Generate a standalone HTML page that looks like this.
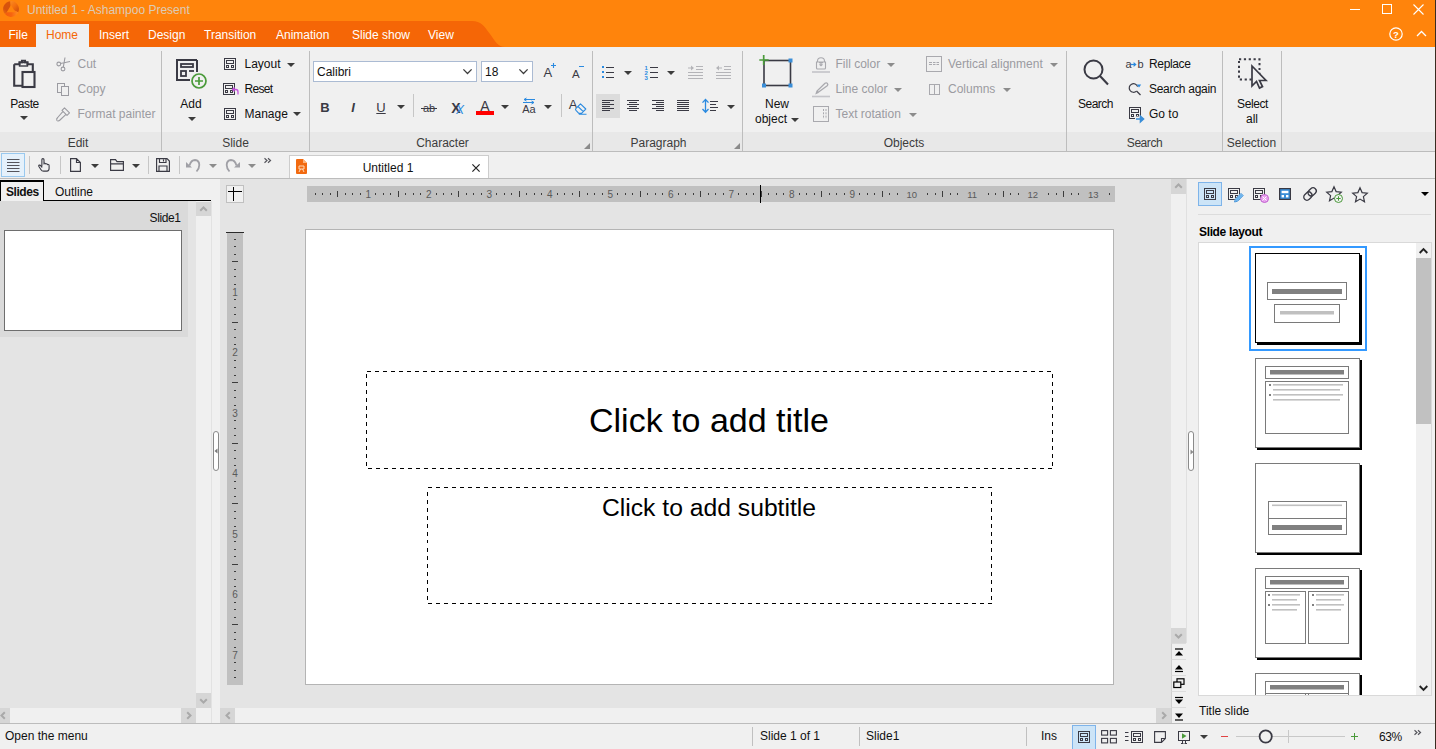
<!DOCTYPE html><html><head><meta charset="utf-8"><title>Untitled 1 - Ashampoo Present</title><style>
*{box-sizing:border-box;margin:0;padding:0}
html,body{width:1436px;height:749px;overflow:hidden;background:#f0f0f0}
body{position:relative;font:12px "Liberation Sans",sans-serif;color:#111}
.a{position:absolute}
.t{position:absolute;white-space:nowrap;line-height:14px;height:14px}
.c{transform:translateX(-50%)}
.d{color:#9b9ba1}
.w{color:#fff}
.sep{position:absolute;width:1px;background:#c6c6c6}
svg{position:absolute;overflow:visible}
.arr{position:absolute;width:0;height:0;border-left:4px solid transparent;border-right:4px solid transparent;border-top:4px solid #3c3c3c}
.arr.g{border-top-color:#8c8c8c}
</style></head><body>
<div class="a" style="left:0px;top:0px;width:1436px;height:47px;background:#ff840c;"></div>
<svg style="left:0px;top:21px" width="520" height="26" viewBox="0 0 520 26"><path d="M0 0 H472 C481 0 484 5 490 13 C495 20 498 26 505 26 H0 Z" fill="#f56606"/></svg>
<svg style="left:3.05px;top:0.9px" width="16" height="16" viewBox="0 0 16 16"><defs><linearGradient id="lgL" x1="0.8" y1="0" x2="0.2" y2="1"><stop offset="0" stop-color="#d9530b"/><stop offset="0.7" stop-color="#d6520c"/><stop offset="1" stop-color="#ea6a14"/></linearGradient><linearGradient id="lgR" x1="0" y1="0" x2="0.8" y2="1"><stop offset="0" stop-color="#fb8a22"/><stop offset="0.5" stop-color="#f4700f"/><stop offset="1" stop-color="#d4500b"/></linearGradient><linearGradient id="lgB" x1="0" y1="0" x2="1" y2="0"><stop offset="0" stop-color="#f25a0e"/><stop offset="0.5" stop-color="#f7640f"/><stop offset="1" stop-color="#ff8e24"/></linearGradient></defs><path d="M8 8 L1.95 13.08 A7.9 7.9 0 0 1 7.31 0.13 Z" fill="url(#lgL)"/><path d="M8 8 L7.31 0.13 A7.9 7.9 0 0 1 15.16 11.34 Z" fill="url(#lgR)"/><path d="M8 8 L15.16 11.34 A7.9 7.9 0 0 1 1.95 13.08 Z" fill="url(#lgB)"/><path d="M8.05 3.9 L12.4 11.15 H3.8 Z" fill="#ff840c"/></svg>
<div class="t " style="left:27px;top:3px;color:#dccbb6">Untitled 1 - Ashampoo Present</div>
<svg style="left:1350px;top:4px" width="80" height="12" viewBox="0 0 80 12"><path d="M0 5.5 H10" stroke="#fff" stroke-width="1" fill="none"/><rect x="32.5" y="0.5" width="9" height="9" stroke="#fff" fill="none"/><path d="M63.5 0.5 L73.5 10.5 M73.5 0.5 L63.5 10.5" stroke="#fff" stroke-width="1.1" fill="none"/></svg>
<svg style="left:1389px;top:27px" width="40" height="14" viewBox="0 0 40 14"><circle cx="7" cy="7" r="6.2" stroke="#fff" stroke-width="1.2" fill="none"/><text x="7" y="10.5" font-size="9.5" font-weight="bold" text-anchor="middle" fill="#fff" font-family="Liberation Sans,sans-serif">?</text><path d="M28 9 L32.5 4.5 L37 9" stroke="#fff" stroke-width="1.3" fill="none"/></svg>
<div class="a" style="left:36px;top:24px;width:53px;height:23px;background:#f0f0f0;"></div>
<div class="t w" style="left:8.5px;top:27.5px;">File</div>
<div class="t " style="left:46px;top:27.5px;color:#f56606">Home</div>
<div class="t w" style="left:99px;top:27.5px;">Insert</div>
<div class="t w" style="left:148px;top:27.5px;">Design</div>
<div class="t w" style="left:204px;top:27.5px;">Transition</div>
<div class="t w" style="left:276px;top:27.5px;">Animation</div>
<div class="t w" style="left:352px;top:27.5px;">Slide show</div>
<div class="t w" style="left:428px;top:27.5px;">View</div>
<div class="a" style="left:0px;top:47px;width:1436px;height:104px;background:#f0f0f0;"></div>
<div class="a" style="left:0px;top:132px;width:1436px;height:19px;background:#e8e8e8;"></div>
<div class="a" style="left:0px;top:151px;width:1436px;height:1px;background:#bcbcbc;"></div>
<div class="a" style="left:161px;top:51px;width:1px;height:100px;background:#bdbdbd;"></div>
<div class="a" style="left:309px;top:51px;width:1px;height:100px;background:#bdbdbd;"></div>
<div class="a" style="left:592px;top:51px;width:1px;height:100px;background:#bdbdbd;"></div>
<div class="a" style="left:742px;top:51px;width:1px;height:100px;background:#bdbdbd;"></div>
<div class="a" style="left:1066px;top:51px;width:1px;height:100px;background:#bdbdbd;"></div>
<div class="a" style="left:1222px;top:51px;width:1px;height:100px;background:#bdbdbd;"></div>
<div class="a" style="left:1281px;top:51px;width:1px;height:100px;background:#bdbdbd;"></div>
<div class="t c" style="left:78px;top:135.5px;color:#3c3c3c">Edit</div>
<div class="t c" style="left:235.5px;top:135.5px;color:#3c3c3c">Slide</div>
<div class="t c" style="left:442.5px;top:135.5px;color:#3c3c3c">Character</div>
<div class="t c" style="left:658.5px;top:135.5px;color:#3c3c3c">Paragraph</div>
<div class="t c" style="left:904px;top:135.5px;color:#3c3c3c">Objects</div>
<div class="t c" style="left:1144.5px;top:135.5px;color:#3c3c3c"><span style="letter-spacing:-0.45px">Search</span></div>
<div class="t c" style="left:1251.5px;top:135.5px;color:#3c3c3c">Selection</div>
<svg style="left:584px;top:143px" width="6" height="6" viewBox="0 0 6 6"><path d="M6 0 V6 H0 Z" fill="#8a8a8a"/></svg>
<svg style="left:734px;top:143px" width="6" height="6" viewBox="0 0 6 6"><path d="M6 0 V6 H0 Z" fill="#8a8a8a"/></svg>
<svg style="left:13px;top:60px" width="23" height="28" viewBox="0 0 23 28"><path d="M1.2 4.2 H6.5 V2.2 H9 V0.8 H12 V2.2 H14.5 V4.2 H19.8 V12 M1.2 4.2 V25.8 H9" stroke="#3a3a44" stroke-width="2.1" fill="none"/><rect x="6.5" y="2.5" width="8" height="3.5" fill="none" stroke="#3a3a44" stroke-width="1.4"/><rect x="9.5" y="12" width="12" height="15" fill="#f0f0f0" stroke="#3a3a44" stroke-width="2.1"/></svg>
<div class="t c" style="left:24.5px;top:97px;letter-spacing:-0.4px">Paste</div>
<div class="arr " style="left:20px;top:116px"></div>
<svg style="left:56px;top:57px" width="15" height="15" viewBox="0 0 15 15"><circle cx="2.8" cy="7" r="1.9" stroke="#9b9ba1" fill="none" stroke-width="1.1"/><circle cx="7" cy="12" r="1.9" stroke="#9b9ba1" fill="none" stroke-width="1.1"/><path d="M4.5 6.5 L14 4.5 M7.3 10.2 L9 0.5" stroke="#9b9ba1" stroke-width="1.1" fill="none"/></svg>
<div class="t d" style="left:77.5px;top:57px;">Cut</div>
<svg style="left:57px;top:83px" width="13" height="13" viewBox="0 0 13 13"><rect x="0.5" y="0.5" width="7" height="9" stroke="#9b9ba1" fill="none"/><rect x="4.5" y="3.5" width="7" height="9" stroke="#9b9ba1" fill="#f0f0f0"/></svg>
<div class="t d" style="left:77.5px;top:82px;">Copy</div>
<svg style="left:56px;top:107px" width="15" height="15" viewBox="0 0 15 15"><path d="M8.5 0.8 L13.5 5.8 L11 8.3 L6 3.3 Z M7 4.3 L10 7.3 L4 13 Q2 14.8 0.9 13.5 Q0 12 1.7 10.5 Z" stroke="#9b9ba1" stroke-width="1.1" fill="none" stroke-linejoin="round"/></svg>
<div class="t d" style="left:77.5px;top:106.5px;">Format painter</div>
<svg style="left:176px;top:59px" width="32" height="32" viewBox="0 0 32 32"><path d="M21 1 H1 V21 H14" stroke="#3a3a44" stroke-width="2" fill="none"/><path d="M21 1 V13" stroke="#3a3a44" stroke-width="2"/><rect x="5" y="5" width="12" height="3" fill="none" stroke="#3a3a44" stroke-width="1.8"/><rect x="5" y="12" width="5" height="5" fill="none" stroke="#3a3a44" stroke-width="1.8"/><path d="M13 12 H18" stroke="#3a3a44" stroke-width="1.8"/><circle cx="23" cy="22" r="7" fill="#f0f0f0" stroke="#4a9a3a" stroke-width="1.7"/><path d="M23 18 V26 M19 22 H27" stroke="#4a9a3a" stroke-width="1.7"/></svg>
<div class="t c" style="left:191px;top:97px;">Add</div>
<div class="arr " style="left:187.5px;top:116.5px"></div>
<svg style="left:224px;top:58px" width="12" height="12" viewBox="0 0 12 12"><rect x="0.5" y="0.5" width="11" height="11" stroke="#3a3a44" stroke-width="1" fill="none"/><rect x="2.5" y="2.5" width="7" height="3" stroke="#3a3a44" stroke-width="1" fill="none"/><rect x="2.5" y="7.5" width="2" height="2" stroke="#3a3a44" stroke-width="1" fill="none"/><rect x="7.5" y="7.5" width="2" height="2" stroke="#3a3a44" stroke-width="1" fill="none"/></svg>
<div class="t " style="left:244.5px;top:57px;">Layout</div>
<div class="arr " style="left:286.5px;top:62.5px"></div>
<svg style="left:223px;top:83px" width="12" height="12" viewBox="0 0 12 12"><rect x="0.5" y="0.5" width="11" height="11" stroke="#3a3a44" stroke-width="1" fill="none"/><rect x="2.5" y="2.5" width="7" height="3" stroke="#3a3a44" stroke-width="1" fill="none"/><rect x="2.5" y="7.5" width="2" height="2" stroke="#3a3a44" stroke-width="1" fill="none"/><rect x="7.5" y="7.5" width="2" height="2" stroke="#3a3a44" stroke-width="1" fill="none"/><path d="M9.5 6.5 H13 Q15 6.5 15 9 V11.5 M11.5 4.5 L9.5 6.5 L11.5 8.5" stroke="#c455dc" stroke-width="1.3" fill="none"/></svg>
<div class="t " style="left:244.5px;top:82px;letter-spacing:-0.7px">Reset</div>
<svg style="left:224px;top:108px" width="12" height="12" viewBox="0 0 12 12"><rect x="0.5" y="0.5" width="11" height="11" stroke="#3a3a44" stroke-width="1" fill="none"/><rect x="2.5" y="2.5" width="7" height="3" stroke="#3a3a44" stroke-width="1" fill="none"/><rect x="2.5" y="7.5" width="2" height="2" stroke="#3a3a44" stroke-width="1" fill="none"/><rect x="7.5" y="7.5" width="2" height="2" stroke="#3a3a44" stroke-width="1" fill="none"/></svg>
<div class="t " style="left:244.5px;top:107px;">Manage</div>
<div class="arr " style="left:292.5px;top:112px"></div>
<div class="a" style="left:313px;top:61px;width:164px;height:21px;background:#fff;border:1px solid #abbbd3"></div>
<div class="t " style="left:317px;top:65px;">Calibri</div>
<svg style="left:463px;top:69px" width="9" height="5" viewBox="0 0 9 5"><path d="M0.4 0.4 L4.5 4.5 L8.6 0.4" stroke="#3c3c3c" stroke-width="1.3" fill="none"/></svg>
<div class="a" style="left:481px;top:61px;width:52px;height:21px;background:#fff;border:1px solid #abbbd3"></div>
<div class="t " style="left:485px;top:65px;">18</div>
<svg style="left:519px;top:69px" width="9" height="5" viewBox="0 0 9 5"><path d="M0.4 0.4 L4.5 4.5 L8.6 0.4" stroke="#3c3c3c" stroke-width="1.3" fill="none"/></svg>
<div class="t " style="left:543.5px;top:66px;font-size:13px;color:#3a3a44">A</div>
<svg style="left:551px;top:63px" width="5" height="5" viewBox="0 0 5 5"><path d="M2.5 0 V5 M0 2.5 H5" stroke="#2a8ae0" stroke-width="1.1"/></svg>
<div class="t " style="left:572px;top:67px;font-size:11.5px;color:#3a3a44">A</div>
<div class="a" style="left:579px;top:66px;width:5px;height:1px;background:#2a8ae0;"></div>
<div class="t c" style="left:325px;top:100.5px;font-weight:bold;font-size:13px;color:#3a3a44">B</div>
<div class="t c" style="left:353px;top:100.5px;font-style:italic;font-size:13px;color:#3a3a44;font-weight:bold">I</div>
<div class="t c" style="left:381px;top:100.5px;font-size:13px;color:#3a3a44;text-decoration:underline">U</div>
<div class="arr " style="left:396.5px;top:105px"></div>
<div class="a" style="left:413px;top:94px;width:1px;height:23px;background:#c6c6c6;"></div>
<div class="t c" style="left:429px;top:101px;font-size:11px;color:#3a3a44">ab</div>
<div class="a" style="left:421px;top:108px;width:16px;height:1px;background:#3a3a44;"></div>
<div class="t c" style="left:456px;top:100.5px;font-size:14px;color:#3a3a44;font-weight:bold">X</div>
<div class="t c" style="left:460px;top:102.5px;font-size:12px;color:#2a8ae0;font-style:italic">X</div>
<div class="t c" style="left:485px;top:98.5px;font-size:14px;color:#3a3a44">A</div>
<div class="a" style="left:476px;top:111px;width:18px;height:4px;background:#ff0000;"></div>
<div class="arr " style="left:500.5px;top:105px"></div>
<div class="t c" style="left:529px;top:102px;font-size:11px;color:#3a3a44">Aa</div>
<svg style="left:522px;top:98px" width="14" height="6" viewBox="0 0 14 6"><path d="M2 1.5 H13 M4.5 0 L2 1.5 L4.5 3 M1 4.5 H12 M9.5 3 L12 4.5 L9.5 6" stroke="#2a8ae0" stroke-width="1" fill="none"/></svg>
<div class="arr " style="left:543.5px;top:105px"></div>
<div class="a" style="left:561px;top:94px;width:1px;height:23px;background:#c6c6c6;"></div>
<div class="t c" style="left:573px;top:97.5px;font-size:13px;color:#3a3a44">A</div>
<svg style="left:574px;top:103px" width="13" height="12" viewBox="0 0 13 12"><path d="M6.5 0.8 L11.8 6 L7.5 10.3 H4.8 L2 7.4 Q1 6.3 2 5.3 Z M4 3.5 L9.3 8.6 M4.8 11.3 H12.5" stroke="#2a8ae0" stroke-width="1.1" fill="#f0f0f0" stroke-linejoin="round"/></svg>
<svg style="left:601px;top:66px" width="14" height="13" viewBox="0 0 14 13"><rect x="1" y="0" width="2" height="2" fill="#2a8ae0"/><rect x="5" y="1" width="8" height="1" fill="#3a3a44"/><rect x="1" y="5" width="2" height="2" fill="#2a8ae0"/><rect x="5" y="6" width="8" height="1" fill="#3a3a44"/><rect x="1" y="10" width="2" height="2" fill="#2a8ae0"/><rect x="5" y="11" width="8" height="1" fill="#3a3a44"/></svg>
<div class="arr " style="left:623.5px;top:71px"></div>
<svg style="left:644px;top:65px" width="14" height="15" viewBox="0 0 14 15"><rect x="6" y="2" width="8" height="1" fill="#3a3a44"/><rect x="6" y="7" width="8" height="1" fill="#3a3a44"/><rect x="6" y="12" width="8" height="1" fill="#3a3a44"/><text font-size="6" fill="#2a8ae0" font-weight="bold" font-family="Liberation Sans,sans-serif"><tspan x="0.5" y="4.8">1</tspan><tspan x="0.5" y="9.8">2</tspan><tspan x="0.5" y="14.8">3</tspan></text></svg>
<div class="arr " style="left:667px;top:71px"></div>
<svg style="left:688px;top:66px" width="15" height="13" viewBox="0 0 15 13"><rect x="8" y="0" width="7" height="1" fill="#b4b4b8"/><rect x="8" y="3" width="7" height="1" fill="#b4b4b8"/><rect x="0" y="6" width="15" height="1" fill="#b4b4b8"/><rect x="0" y="9" width="15" height="1" fill="#b4b4b8"/><rect x="0" y="12" width="15" height="1" fill="#b4b4b8"/><path d="M0 1.5 H3 V-0.5 L6 2 L3 4.5 V2.5 H0 Z" fill="#b4b4b8"/></svg>
<svg style="left:716px;top:66px" width="15" height="13" viewBox="0 0 15 13"><rect x="8" y="0" width="7" height="1" fill="#b4b4b8"/><rect x="8" y="3" width="7" height="1" fill="#b4b4b8"/><rect x="0" y="6" width="15" height="1" fill="#b4b4b8"/><rect x="0" y="9" width="15" height="1" fill="#b4b4b8"/><rect x="0" y="12" width="15" height="1" fill="#b4b4b8"/><path d="M6 1.5 H3 V-0.5 L0 2 L3 4.5 V2.5 H6 Z" fill="#b4b4b8"/></svg>
<div class="a" style="left:596px;top:94px;width:24px;height:24px;background:#dcdcdc;"></div>
<svg style="left:602px;top:100px" width="12" height="11" viewBox="0 0 12 11"><rect x="0" y="0" width="12" height="1" fill="#3a3a44"/><rect x="0" y="2" width="8" height="1" fill="#3a3a44"/><rect x="0" y="4" width="12" height="1" fill="#3a3a44"/><rect x="0" y="6" width="8" height="1" fill="#3a3a44"/><rect x="0" y="8" width="12" height="1" fill="#3a3a44"/><rect x="0" y="10" width="8" height="1" fill="#3a3a44"/></svg>
<svg style="left:627px;top:100px" width="12" height="11" viewBox="0 0 12 11"><rect x="0" y="0" width="12" height="1" fill="#3a3a44"/><rect x="2" y="2" width="8" height="1" fill="#3a3a44"/><rect x="0" y="4" width="12" height="1" fill="#3a3a44"/><rect x="2" y="6" width="8" height="1" fill="#3a3a44"/><rect x="0" y="8" width="12" height="1" fill="#3a3a44"/><rect x="2" y="10" width="8" height="1" fill="#3a3a44"/></svg>
<svg style="left:652px;top:100px" width="12" height="11" viewBox="0 0 12 11"><rect x="0" y="0" width="12" height="1" fill="#3a3a44"/><rect x="4" y="2" width="8" height="1" fill="#3a3a44"/><rect x="0" y="4" width="12" height="1" fill="#3a3a44"/><rect x="4" y="6" width="8" height="1" fill="#3a3a44"/><rect x="0" y="8" width="12" height="1" fill="#3a3a44"/><rect x="4" y="10" width="8" height="1" fill="#3a3a44"/></svg>
<svg style="left:677px;top:100px" width="12" height="11" viewBox="0 0 12 11"><rect x="0" y="0" width="12" height="1" fill="#3a3a44"/><rect x="0" y="2" width="12" height="1" fill="#3a3a44"/><rect x="0" y="4" width="12" height="1" fill="#3a3a44"/><rect x="0" y="6" width="12" height="1" fill="#3a3a44"/><rect x="0" y="8" width="12" height="1" fill="#3a3a44"/><rect x="0" y="10" width="12" height="1" fill="#3a3a44"/></svg>
<svg style="left:701px;top:98px" width="18" height="16" viewBox="0 0 18 16"><path d="M4.5 1.5 V14 M1.5 4.6 L4.5 1.5 L7.5 4.6 M1.5 11 L4.5 14.2 L7.5 11" stroke="#2a8ae0" stroke-width="1.3" fill="none"/><rect x="9" y="3" width="8" height="1" fill="#3a3a44"/><rect x="9" y="6" width="6" height="1" fill="#3a3a44"/><rect x="9" y="9" width="8" height="1" fill="#3a3a44"/><rect x="9" y="12" width="6" height="1" fill="#3a3a44"/></svg>
<div class="arr " style="left:726.5px;top:105px"></div>
<svg style="left:760px;top:57px" width="33" height="31" viewBox="0 0 33 31"><rect x="4" y="3.5" width="26.5" height="25" stroke="#3a3a44" stroke-width="1.6" fill="none"/><rect x="28.5" y="1.5" width="4" height="4" fill="#3a8ed8"/><rect x="2" y="26.5" width="4" height="4" fill="#3a8ed8"/><rect x="28.5" y="26.5" width="4" height="4" fill="#3a8ed8"/><path d="M3.7 -2 V8 M-0.7 3 H8.7" stroke="#4a9a3a" stroke-width="1.7"/></svg>
<div class="t c" style="left:777px;top:97px;">New</div>
<div class="t c" style="left:771px;top:112px;">object</div>
<div class="arr " style="left:790.5px;top:117.5px"></div>
<svg style="left:812px;top:57px" width="18" height="16" viewBox="0 0 18 16"><path d="M5.5 5 V4.2 Q5.5 0.8 9 0.8 Q12.5 0.8 12.5 4.2 V5 M4.5 5 H13.5 V11 Q13.5 12 12.5 12 H5.5 Q4.5 12 4.5 11 Z M9 5.5 V8.5 M7.5 7.3 L9 8.8 L10.5 7.3 M7 5.8 H11" stroke="#a9a9ae" fill="none" stroke-width="1.1"/><path d="M0 15 H18" stroke="#c4c4c8" stroke-width="1.6"/></svg>
<div class="t d" style="left:835.5px;top:57px;">Fill color</div>
<div class="arr g" style="left:886.5px;top:62.5px"></div>
<svg style="left:812px;top:81px" width="18" height="17" viewBox="0 0 18 17"><path d="M6.3 11.3 L4.3 12.2 L5 10 L13 2.3 Q14.3 1.3 15.4 2.4 Q16.4 3.6 15.2 4.8 Z M5 10 L6.3 11.3" stroke="#a9a9ae" fill="none" stroke-width="1.3"/><path d="M0 15.5 H18" stroke="#c4c4c8" stroke-width="1.6"/></svg>
<div class="t d" style="left:835.5px;top:82px;">Line color</div>
<div class="arr g" style="left:893.5px;top:88px"></div>
<svg style="left:813px;top:106px" width="16" height="16" viewBox="0 0 16 16"><rect x="0.5" y="0.5" width="15" height="15" stroke="#a9a9ae" fill="none"/><path d="M10.5 3 V13 M13 3 V13" stroke="#a9a9ae" stroke-dasharray="2 1.3"/></svg>
<div class="t d" style="left:835.5px;top:107px;">Text rotation</div>
<div class="arr g" style="left:908.5px;top:113px"></div>
<svg style="left:926px;top:56px" width="16" height="16" viewBox="0 0 16 16"><rect x="0.5" y="0.5" width="15" height="15" stroke="#a9a9ae" fill="none"/><path d="M3 6.5 H6 M7 6.5 H9.5 M10.5 6.5 H13 M3 8.5 H6 M7 8.5 H9.5 M10.5 8.5 H13" stroke="#a9a9ae"/></svg>
<div class="t d" style="left:948px;top:57px;">Vertical alignment</div>
<div class="arr g" style="left:1050px;top:62.5px"></div>
<svg style="left:929px;top:84px" width="11" height="11" viewBox="0 0 11 11"><rect x="0.5" y="0.5" width="10" height="10" stroke="#a9a9ae" fill="none"/><path d="M5.5 0.5 V10.5" stroke="#a9a9ae"/></svg>
<div class="t d" style="left:948px;top:82px;">Columns</div>
<div class="arr g" style="left:1002.5px;top:87.5px"></div>
<svg style="left:1082px;top:58px" width="28" height="28" viewBox="0 0 28 28"><circle cx="11.5" cy="11.5" r="9" stroke="#3a3a44" stroke-width="2" fill="none"/><path d="M18 18 L26 26.5" stroke="#3a3a44" stroke-width="2.1"/></svg>
<div class="t c" style="left:1095.5px;top:97px;letter-spacing:-0.5px">Search</div>
<div class="t " style="left:1125.5px;top:57px;font-size:11px;color:#3a3a44">a</div>
<div class="t " style="left:1137.5px;top:57px;font-size:11px;color:#3a3a44">b</div>
<svg style="left:1131px;top:62px" width="6" height="5" viewBox="0 0 6 5"><path d="M0 2.5 H3" stroke="#2a8ae0" fill="none" stroke-width="1.2"/><path d="M2.6 0 L5.6 2.5 L2.6 5 Z" fill="#2a8ae0"/></svg>
<div class="t " style="left:1149px;top:57px;letter-spacing:-0.35px">Replace</div>
<svg style="left:1128px;top:82px" width="14" height="14" viewBox="0 0 14 14"><path d="M9.6 4.6 A4.3 4.3 0 1 0 8.5 9.1" stroke="#3a3a44" stroke-width="1.2" fill="none"/><path d="M8.5 9 L12.5 13" stroke="#3a3a44" stroke-width="1.2"/><path d="M8.8 2.6 H13.2 L11 5.4 Z" fill="#2a8ae0"/></svg>
<div class="t " style="left:1149px;top:82px;letter-spacing:-0.3px">Search again</div>
<svg style="left:1129px;top:107px" width="12" height="12" viewBox="0 0 12 12"><rect x="0.5" y="0.5" width="11" height="11" stroke="#3a3a44" stroke-width="1" fill="none"/><rect x="2.5" y="2.5" width="7" height="3" stroke="#3a3a44" stroke-width="1" fill="none"/><rect x="2.5" y="7.5" width="2" height="2" stroke="#3a3a44" stroke-width="1" fill="none"/><rect x="7.5" y="7.5" width="2" height="2" stroke="#3a3a44" stroke-width="1" fill="none"/><rect x="6" y="9.5" width="10" height="5" fill="#f0f0f0" stroke="none"/><path d="M7 12 H14 M11.5 9.3 L14.5 12 L11.5 14.7 Z" stroke="#3a8ed8" stroke-width="1.6" fill="#3a8ed8"/></svg>
<div class="t " style="left:1149px;top:107px;">Go to</div>
<svg style="left:1238px;top:58px" width="30" height="32" viewBox="0 0 30 32"><rect x="1" y="1.3" width="20.5" height="20.2" stroke="#3a3a44" stroke-width="2" stroke-dasharray="2.2 2.65" fill="none"/><path d="M14 8 V28 L18.5 23.5 L21.5 30 L24.5 28.5 L21.5 22.5 H28 Z" fill="#f0f0f0" stroke="#3a3a44" stroke-width="1.7" stroke-linejoin="miter"/></svg>
<div class="t c" style="left:1252.5px;top:97px;letter-spacing:-0.4px">Select</div>
<div class="t c" style="left:1252px;top:112px;">all</div>
<div class="a" style="left:0px;top:152px;width:1436px;height:27px;background:#f0f0f0;"></div>
<div class="a" style="left:0px;top:178px;width:1436px;height:1px;background:#bcbcbc;"></div>
<div class="a" style="left:1px;top:153px;width:24px;height:24px;background:#e5f1fb;border:1px solid #99c9ef"></div>
<svg style="left:7px;top:158px" width="13" height="14" viewBox="0 0 13 14"><path d="M0 1.5 H12.5" stroke="#55555c" stroke-width="1"/><path d="M0 4.5 H12.5" stroke="#55555c" stroke-width="1"/><path d="M0 7.5 H12.5" stroke="#55555c" stroke-width="1"/><path d="M0 10.5 H12.5" stroke="#55555c" stroke-width="1"/><path d="M0 13.5 H12.5" stroke="#55555c" stroke-width="1"/></svg>
<div class="a" style="left:29px;top:156px;width:1px;height:18px;background:#c6c6c6;"></div>
<div class="a" style="left:60px;top:156px;width:1px;height:18px;background:#c6c6c6;"></div>
<div class="a" style="left:148px;top:156px;width:1px;height:18px;background:#c6c6c6;"></div>
<div class="a" style="left:179px;top:156px;width:1px;height:18px;background:#c6c6c6;"></div>
<svg style="left:38px;top:158px" width="12" height="14" viewBox="0 0 14 16.5"><path d="M4.5 9.5 V2 Q4.5 0.7 5.7 0.7 Q7 0.7 7 2 V7 M7 6.5 Q8.2 5.8 9.2 7 M9.2 7 Q10.4 6.4 11.2 7.6 M11.2 7.8 Q13 7.3 13 9 V12.5 Q13 15.5 10.5 15.5 H6.5 Q4.5 15.5 3.5 13.8 L1 10 Q0.3 8.8 1.5 8.4 Q2.6 8.2 3.3 9.3 L4.5 10.8" stroke="#3a3a44" stroke-width="1.3" fill="none" stroke-linejoin="round" stroke-linecap="round"/></svg>
<svg style="left:70px;top:158px" width="11" height="14" viewBox="0 0 11 14"><path d="M0.6 0.6 H6.5 L10.4 4.5 V13.4 H0.6 Z M6.5 0.6 V4.5 H10.4" stroke="#3a3a44" stroke-width="1.15" fill="none"/></svg>
<div class="arr " style="left:90.5px;top:164px"></div>
<svg style="left:110px;top:159px" width="14" height="12" viewBox="0 0 14 12"><path d="M0.6 11.4 V0.6 H5.5 L7 2.6 H13.4 V11.4 Z M0.6 4.8 H13.4" stroke="#3a3a44" stroke-width="1.15" fill="none"/></svg>
<div class="arr " style="left:132px;top:164px"></div>
<svg style="left:156px;top:158px" width="14" height="14" viewBox="0 0 14 14"><path d="M0.6 0.6 H11 L13.4 3 V13.4 H0.6 Z M3.5 0.6 V4.5 H10 V0.6 M3 13.4 V8 H11 V13.4 M7.5 1.5 V3.5" stroke="#3a3a44" stroke-width="1.15" fill="none"/></svg>
<svg style="left:186px;top:158px" width="14" height="14" viewBox="0 0 14 14"><path d="M0 4 V9.5 H6 Z" fill="#a0a0a6"/><path d="M3.5 7.5 Q5 2 9 2 Q13.3 2.3 13.3 7 Q13.3 10.5 10.5 13.5" stroke="#a0a0a6" stroke-width="1.8" fill="none"/></svg>
<div class="arr g" style="left:208.5px;top:163.5px"></div>
<svg style="left:226px;top:158px" width="14" height="14" viewBox="0 0 14 14"><path d="M14 4 V9.5 H8 Z" fill="#a0a0a6"/><path d="M10.5 7.5 Q9 2 5 2 Q0.7 2.3 0.7 7 Q0.7 10.5 3.5 13.5" stroke="#a0a0a6" stroke-width="1.8" fill="none"/></svg>
<div class="arr g" style="left:248px;top:163.5px"></div>
<svg style="left:264px;top:158px" width="7" height="5" viewBox="0 0 7 5"><path d="M0.5 0.3 L3 2.5 L0.5 4.7 M4 0.3 L6.5 2.5 L4 4.7" stroke="#55555c" stroke-width="1.2" fill="none"/></svg>
<div class="a" style="left:289px;top:155px;width:200px;height:23px;background:#fff;border:1px solid #cdcdcd;border-bottom:none"></div>
<svg style="left:296px;top:159px" width="11" height="15" viewBox="0 0 11 15"><path d="M0 1 Q0 0 1 0 H7 L11 4 V14 Q11 15 10 15 H1 Q0 15 0 14 Z" fill="#f26a10"/><path d="M7 0 L11 4 H7 Z" fill="#ffb37a"/><path d="M3 7 H8 V10 H3 Z M4.5 10 L3 13 M6.5 10 L8 13" stroke="#ffd9b8" stroke-width="1" fill="none"/></svg>
<div class="t c" style="left:388px;top:160.7px;">Untitled 1</div>
<svg style="left:472px;top:164px" width="8" height="8" viewBox="0 0 8 8"><path d="M0.4 0.4 L7.6 7.6 M7.6 0.4 L0.4 7.6" stroke="#222" stroke-width="1.2"/></svg>
<div class="a" style="left:0px;top:179px;width:211px;height:544px;background:#e4e4e4;"></div>
<div class="a" style="left:0px;top:179px;width:211px;height:22px;background:#f0f0f0;"></div>
<div class="a" style="left:0px;top:200px;width:211px;height:1px;background:#000;"></div>
<div class="a" style="left:0px;top:180px;width:44px;height:21px;background:#f0f0f0;border:1px solid #000;border-top-width:2px;border-bottom:none"></div>
<div class="t " style="left:6px;top:184.5px;font-weight:bold;letter-spacing:-0.45px">Slides</div>
<div class="t " style="left:55px;top:184.5px;">Outline</div>
<div class="a" style="left:0px;top:201px;width:188px;height:136px;background:#dadada;"></div>
<div class="t " style="left:180.5px;top:211px;transform:translateX(-100%);letter-spacing:-0.4px">Slide1</div>
<div class="a" style="left:4px;top:230px;width:178px;height:101px;background:#fff;border:1px solid #6e6e6e"></div>
<div class="a" style="left:196px;top:201px;width:15px;height:507px;background:#f0f0f0;"></div>
<div class="a" style="left:196px;top:202px;width:15px;height:14px;background:#d6d6d6;"></div>
<svg style="left:199px;top:206px" width="9" height="6" viewBox="0 0 9 6"><path d="M1.2 4.8 L4.5 1.5 L7.8 4.8" stroke="#a9a9a9" stroke-width="2" fill="none"/></svg>
<div class="a" style="left:196px;top:693px;width:15px;height:15px;background:#d6d6d6;"></div>
<svg style="left:199px;top:698px" width="9" height="6" viewBox="0 0 9 6"><path d="M1.2 1.2 L4.5 4.5 L7.8 1.2" stroke="#a9a9a9" stroke-width="2" fill="none"/></svg>
<div class="a" style="left:0px;top:708px;width:196px;height:15px;background:#f0f0f0;"></div>
<div class="a" style="left:0px;top:708px;width:10px;height:15px;background:#d6d6d6;"></div>
<svg style="left:0px;top:711px" width="6" height="9" viewBox="0 0 6 9"><path d="M4.8 1.2 L1.5 4.5 L4.8 7.8" stroke="#a9a9a9" stroke-width="2" fill="none"/></svg>
<div class="a" style="left:181px;top:708px;width:15px;height:15px;background:#d6d6d6;"></div>
<svg style="left:186px;top:711px" width="6" height="9" viewBox="0 0 6 9"><path d="M1.2 1.2 L4.5 4.5 L1.2 7.8" stroke="#a9a9a9" stroke-width="2" fill="none"/></svg>
<div class="a" style="left:196px;top:708px;width:15px;height:15px;background:#f0f0f0;"></div>
<div class="a" style="left:211px;top:179px;width:9px;height:544px;background:#f0f0f0;"></div>
<div class="a" style="left:211px;top:201px;width:1px;height:522px;background:#e2e2e2;"></div>
<div class="a" style="left:213px;top:431px;width:6px;height:40px;background:#fff;border:1px solid #8a8a8a;border-radius:3px"></div>
<svg style="left:214px;top:448px" width="4" height="6" viewBox="0 0 4 6"><path d="M3.5 0.5 L0.5 3 L3.5 5.5 Z" fill="#777"/></svg>
<div class="a" style="left:220px;top:179px;width:951px;height:529px;background:#e4e4e4;"></div>
<div class="a" style="left:226px;top:185px;width:18px;height:18px;background:#f0f0f0;border:1px solid #c0c0c0"></div>
<div class="a" style="left:228px;top:191px;width:14px;height:1px;background:#000;"></div>
<div class="a" style="left:233px;top:187px;width:1px;height:14px;background:#000;"></div>
<div class="a" style="left:307px;top:186px;width:808px;height:16px;background:#c0c0c0;"></div>
<svg style="left:307px;top:186px" width="808" height="16" viewBox="0 0 808 16"><g font-family="Liberation Sans,sans-serif" font-size="10" fill="#5a5a5a"><rect x="8" y="7" width="1" height="2" fill="#3c3c3c"/><rect x="15" y="7" width="1" height="2" fill="#3c3c3c"/><rect x="23" y="7" width="1" height="2" fill="#3c3c3c"/><rect x="30" y="5" width="1" height="6" fill="#3c3c3c"/><rect x="38" y="7" width="1" height="2" fill="#3c3c3c"/><rect x="45" y="7" width="1" height="2" fill="#3c3c3c"/><rect x="53" y="7" width="1" height="2" fill="#3c3c3c"/><text x="61.3" y="11.5" text-anchor="middle">1</text><rect x="68" y="7" width="1" height="2" fill="#3c3c3c"/><rect x="76" y="7" width="1" height="2" fill="#3c3c3c"/><rect x="83" y="7" width="1" height="2" fill="#3c3c3c"/><rect x="91" y="5" width="1" height="6" fill="#3c3c3c"/><rect x="98" y="7" width="1" height="2" fill="#3c3c3c"/><rect x="106" y="7" width="1" height="2" fill="#3c3c3c"/><rect x="113" y="7" width="1" height="2" fill="#3c3c3c"/><text x="121.8" y="11.5" text-anchor="middle">2</text><rect x="129" y="7" width="1" height="2" fill="#3c3c3c"/><rect x="136" y="7" width="1" height="2" fill="#3c3c3c"/><rect x="144" y="7" width="1" height="2" fill="#3c3c3c"/><rect x="151" y="5" width="1" height="6" fill="#3c3c3c"/><rect x="159" y="7" width="1" height="2" fill="#3c3c3c"/><rect x="166" y="7" width="1" height="2" fill="#3c3c3c"/><rect x="174" y="7" width="1" height="2" fill="#3c3c3c"/><text x="182.3" y="11.5" text-anchor="middle">3</text><rect x="189" y="7" width="1" height="2" fill="#3c3c3c"/><rect x="197" y="7" width="1" height="2" fill="#3c3c3c"/><rect x="204" y="7" width="1" height="2" fill="#3c3c3c"/><rect x="212" y="5" width="1" height="6" fill="#3c3c3c"/><rect x="219" y="7" width="1" height="2" fill="#3c3c3c"/><rect x="227" y="7" width="1" height="2" fill="#3c3c3c"/><rect x="234" y="7" width="1" height="2" fill="#3c3c3c"/><text x="242.8" y="11.5" text-anchor="middle">4</text><rect x="250" y="7" width="1" height="2" fill="#3c3c3c"/><rect x="257" y="7" width="1" height="2" fill="#3c3c3c"/><rect x="265" y="7" width="1" height="2" fill="#3c3c3c"/><rect x="272" y="5" width="1" height="6" fill="#3c3c3c"/><rect x="280" y="7" width="1" height="2" fill="#3c3c3c"/><rect x="287" y="7" width="1" height="2" fill="#3c3c3c"/><rect x="295" y="7" width="1" height="2" fill="#3c3c3c"/><text x="303.3" y="11.5" text-anchor="middle">5</text><rect x="310" y="7" width="1" height="2" fill="#3c3c3c"/><rect x="318" y="7" width="1" height="2" fill="#3c3c3c"/><rect x="325" y="7" width="1" height="2" fill="#3c3c3c"/><rect x="333" y="5" width="1" height="6" fill="#3c3c3c"/><rect x="340" y="7" width="1" height="2" fill="#3c3c3c"/><rect x="348" y="7" width="1" height="2" fill="#3c3c3c"/><rect x="355" y="7" width="1" height="2" fill="#3c3c3c"/><text x="363.8" y="11.5" text-anchor="middle">6</text><rect x="371" y="7" width="1" height="2" fill="#3c3c3c"/><rect x="378" y="7" width="1" height="2" fill="#3c3c3c"/><rect x="386" y="7" width="1" height="2" fill="#3c3c3c"/><rect x="393" y="5" width="1" height="6" fill="#3c3c3c"/><rect x="401" y="7" width="1" height="2" fill="#3c3c3c"/><rect x="408" y="7" width="1" height="2" fill="#3c3c3c"/><rect x="416" y="7" width="1" height="2" fill="#3c3c3c"/><text x="424.3" y="11.5" text-anchor="middle">7</text><rect x="431" y="7" width="1" height="2" fill="#3c3c3c"/><rect x="439" y="7" width="1" height="2" fill="#3c3c3c"/><rect x="446" y="7" width="1" height="2" fill="#3c3c3c"/><rect x="454" y="5" width="1" height="6" fill="#3c3c3c"/><rect x="461" y="7" width="1" height="2" fill="#3c3c3c"/><rect x="469" y="7" width="1" height="2" fill="#3c3c3c"/><rect x="476" y="7" width="1" height="2" fill="#3c3c3c"/><text x="484.8" y="11.5" text-anchor="middle">8</text><rect x="492" y="7" width="1" height="2" fill="#3c3c3c"/><rect x="499" y="7" width="1" height="2" fill="#3c3c3c"/><rect x="507" y="7" width="1" height="2" fill="#3c3c3c"/><rect x="514" y="5" width="1" height="6" fill="#3c3c3c"/><rect x="522" y="7" width="1" height="2" fill="#3c3c3c"/><rect x="529" y="7" width="1" height="2" fill="#3c3c3c"/><rect x="537" y="7" width="1" height="2" fill="#3c3c3c"/><text x="545.3" y="11.5" text-anchor="middle">9</text><rect x="552" y="7" width="1" height="2" fill="#3c3c3c"/><rect x="560" y="7" width="1" height="2" fill="#3c3c3c"/><rect x="567" y="7" width="1" height="2" fill="#3c3c3c"/><rect x="575" y="5" width="1" height="6" fill="#3c3c3c"/><rect x="582" y="7" width="1" height="2" fill="#3c3c3c"/><rect x="590" y="7" width="1" height="2" fill="#3c3c3c"/><text x="604.7" y="11.5" text-anchor="middle" font-size="9.5">10</text><rect x="620" y="7" width="1" height="2" fill="#3c3c3c"/><rect x="628" y="7" width="1" height="2" fill="#3c3c3c"/><rect x="635" y="5" width="1" height="6" fill="#3c3c3c"/><rect x="643" y="7" width="1" height="2" fill="#3c3c3c"/><rect x="650" y="7" width="1" height="2" fill="#3c3c3c"/><text x="665.2" y="11.5" text-anchor="middle" font-size="9.5">11</text><rect x="681" y="7" width="1" height="2" fill="#3c3c3c"/><rect x="688" y="7" width="1" height="2" fill="#3c3c3c"/><rect x="696" y="5" width="1" height="6" fill="#3c3c3c"/><rect x="703" y="7" width="1" height="2" fill="#3c3c3c"/><rect x="711" y="7" width="1" height="2" fill="#3c3c3c"/><text x="725.7" y="11.5" text-anchor="middle" font-size="9.5">12</text><rect x="741" y="7" width="1" height="2" fill="#3c3c3c"/><rect x="749" y="7" width="1" height="2" fill="#3c3c3c"/><rect x="756" y="5" width="1" height="6" fill="#3c3c3c"/><rect x="764" y="7" width="1" height="2" fill="#3c3c3c"/><rect x="771" y="7" width="1" height="2" fill="#3c3c3c"/><text x="786.2" y="11.5" text-anchor="middle" font-size="9.5">13</text><rect x="802" y="7" width="1" height="2" fill="#3c3c3c"/></g></svg>
<div class="a" style="left:760px;top:185px;width:1px;height:18px;background:#000;"></div>
<div class="a" style="left:227px;top:233px;width:16px;height:452px;background:#c0c0c0;"></div>
<div class="a" style="left:226px;top:232px;width:18px;height:1px;background:#2a2a2a;"></div>
<svg style="left:227px;top:231px" width="16" height="453" viewBox="0 0 16 453"><g font-family="Liberation Sans,sans-serif" font-size="10" fill="#5a5a5a"><rect x="7" y="8" width="2" height="1" fill="#3c3c3c"/><rect x="7" y="15" width="2" height="1" fill="#3c3c3c"/><rect x="7" y="23" width="2" height="1" fill="#3c3c3c"/><rect x="5" y="30" width="6" height="1" fill="#3c3c3c"/><rect x="7" y="38" width="2" height="1" fill="#3c3c3c"/><rect x="7" y="45" width="2" height="1" fill="#3c3c3c"/><rect x="7" y="53" width="2" height="1" fill="#3c3c3c"/><text x="8" y="64.6" text-anchor="middle">1</text><rect x="7" y="68" width="2" height="1" fill="#3c3c3c"/><rect x="7" y="76" width="2" height="1" fill="#3c3c3c"/><rect x="7" y="83" width="2" height="1" fill="#3c3c3c"/><rect x="5" y="91" width="6" height="1" fill="#3c3c3c"/><rect x="7" y="98" width="2" height="1" fill="#3c3c3c"/><rect x="7" y="106" width="2" height="1" fill="#3c3c3c"/><rect x="7" y="113" width="2" height="1" fill="#3c3c3c"/><text x="8" y="125.1" text-anchor="middle">2</text><rect x="7" y="129" width="2" height="1" fill="#3c3c3c"/><rect x="7" y="136" width="2" height="1" fill="#3c3c3c"/><rect x="7" y="144" width="2" height="1" fill="#3c3c3c"/><rect x="5" y="151" width="6" height="1" fill="#3c3c3c"/><rect x="7" y="159" width="2" height="1" fill="#3c3c3c"/><rect x="7" y="166" width="2" height="1" fill="#3c3c3c"/><rect x="7" y="174" width="2" height="1" fill="#3c3c3c"/><text x="8" y="185.6" text-anchor="middle">3</text><rect x="7" y="189" width="2" height="1" fill="#3c3c3c"/><rect x="7" y="197" width="2" height="1" fill="#3c3c3c"/><rect x="7" y="204" width="2" height="1" fill="#3c3c3c"/><rect x="5" y="212" width="6" height="1" fill="#3c3c3c"/><rect x="7" y="219" width="2" height="1" fill="#3c3c3c"/><rect x="7" y="227" width="2" height="1" fill="#3c3c3c"/><rect x="7" y="234" width="2" height="1" fill="#3c3c3c"/><text x="8" y="246.1" text-anchor="middle">4</text><rect x="7" y="250" width="2" height="1" fill="#3c3c3c"/><rect x="7" y="257" width="2" height="1" fill="#3c3c3c"/><rect x="7" y="265" width="2" height="1" fill="#3c3c3c"/><rect x="5" y="272" width="6" height="1" fill="#3c3c3c"/><rect x="7" y="280" width="2" height="1" fill="#3c3c3c"/><rect x="7" y="287" width="2" height="1" fill="#3c3c3c"/><rect x="7" y="295" width="2" height="1" fill="#3c3c3c"/><text x="8" y="306.6" text-anchor="middle">5</text><rect x="7" y="310" width="2" height="1" fill="#3c3c3c"/><rect x="7" y="318" width="2" height="1" fill="#3c3c3c"/><rect x="7" y="325" width="2" height="1" fill="#3c3c3c"/><rect x="5" y="333" width="6" height="1" fill="#3c3c3c"/><rect x="7" y="340" width="2" height="1" fill="#3c3c3c"/><rect x="7" y="348" width="2" height="1" fill="#3c3c3c"/><rect x="7" y="355" width="2" height="1" fill="#3c3c3c"/><text x="8" y="367.1" text-anchor="middle">6</text><rect x="7" y="371" width="2" height="1" fill="#3c3c3c"/><rect x="7" y="378" width="2" height="1" fill="#3c3c3c"/><rect x="7" y="386" width="2" height="1" fill="#3c3c3c"/><rect x="5" y="393" width="6" height="1" fill="#3c3c3c"/><rect x="7" y="401" width="2" height="1" fill="#3c3c3c"/><rect x="7" y="408" width="2" height="1" fill="#3c3c3c"/><rect x="7" y="416" width="2" height="1" fill="#3c3c3c"/><text x="8" y="427.6" text-anchor="middle">7</text><rect x="7" y="431" width="2" height="1" fill="#3c3c3c"/><rect x="7" y="439" width="2" height="1" fill="#3c3c3c"/><rect x="7" y="446" width="2" height="1" fill="#3c3c3c"/></g></svg>
<div class="a" style="left:305px;top:229px;width:809px;height:456px;background:#fff;border:1px solid #b4b4b4"></div>
<svg style="left:366px;top:371px" width="687" height="98" viewBox="0 0 687 98"><rect x="0.5" y="0.5" width="686" height="97" fill="none" stroke="#000" stroke-width="1" stroke-dasharray="4 4" shape-rendering="crispEdges"/></svg>
<svg style="left:427px;top:487px" width="565" height="117" viewBox="0 0 565 117"><rect x="0.5" y="0.5" width="564" height="116" fill="none" stroke="#000" stroke-width="1" stroke-dasharray="4 4" shape-rendering="crispEdges"/></svg>
<div class="t c" style="left:709px;top:412.5px;font-size:34px;line-height:40px;height:40px;margin-top:-13px;color:#000">Click to add title</div>
<div class="t c" style="left:709px;top:500.5px;font-size:24.7px;line-height:30px;height:30px;margin-top:-8px;color:#000">Click to add subtitle</div>
<div class="a" style="left:1171px;top:179px;width:15px;height:464px;background:#f0f0f0;"></div>
<div class="a" style="left:1171px;top:179px;width:15px;height:15px;background:#d6d6d6;"></div>
<svg style="left:1174px;top:183px" width="9" height="6" viewBox="0 0 9 6"><path d="M1.2 4.8 L4.5 1.5 L7.8 4.8" stroke="#a9a9a9" stroke-width="2" fill="none"/></svg>
<div class="a" style="left:1171px;top:628px;width:15px;height:15px;background:#d6d6d6;"></div>
<svg style="left:1174px;top:633px" width="9" height="6" viewBox="0 0 9 6"><path d="M1.2 1.2 L4.5 4.5 L7.8 1.2" stroke="#a9a9a9" stroke-width="2" fill="none"/></svg>
<div class="a" style="left:1171px;top:643px;width:16px;height:17px;background:#f0f0f0;border:1px solid #dcdcdc;border-left-color:#cfcfcf;border-right-color:#a6a6a6"></div>
<div class="a" style="left:1171px;top:659px;width:16px;height:17px;background:#f0f0f0;border:1px solid #dcdcdc;border-left-color:#cfcfcf;border-right-color:#a6a6a6"></div>
<div class="a" style="left:1171px;top:675px;width:16px;height:17px;background:#f0f0f0;border:1px solid #dcdcdc;border-left-color:#cfcfcf;border-right-color:#a6a6a6"></div>
<div class="a" style="left:1171px;top:691px;width:16px;height:17px;background:#f0f0f0;border:1px solid #dcdcdc;border-left-color:#cfcfcf;border-right-color:#a6a6a6"></div>
<div class="a" style="left:1171px;top:707px;width:16px;height:17px;background:#f0f0f0;border:1px solid #dcdcdc;border-left-color:#cfcfcf;border-right-color:#a6a6a6"></div>
<svg style="left:1173.5px;top:648px" width="10" height="10" viewBox="0 0 10 10"><path d="M1 1 H9" stroke="#000" stroke-width="1.2"/><path d="M5 3 L9 7.5 H1 Z" fill="#000"/></svg>
<svg style="left:1173.5px;top:664px" width="10" height="10" viewBox="0 0 10 10"><path d="M5 1 L9 5.5 H1 Z" fill="#000"/><path d="M1 7.5 H9" stroke="#000" stroke-width="1.2"/></svg>
<svg style="left:1173px;top:678px" width="12" height="11" viewBox="0 0 12 11"><rect x="4" y="0.8" width="7" height="5.5" fill="#f0f0f0" stroke="#000" stroke-width="1.2"/><rect x="0.8" y="4" width="7" height="5.5" fill="#f0f0f0" stroke="#000" stroke-width="1.2"/></svg>
<svg style="left:1173.5px;top:696px" width="10" height="10" viewBox="0 0 10 10"><path d="M1 1.5 H9" stroke="#000" stroke-width="1.2"/><path d="M1 3.5 H9 L5 8 Z" fill="#000"/></svg>
<svg style="left:1173.5px;top:711.5px" width="10" height="10" viewBox="0 0 10 10"><path d="M1 1.5 H9 L5 6 Z" fill="#000"/><path d="M1 8 H9" stroke="#000" stroke-width="1.2"/></svg>
<div class="a" style="left:220px;top:708px;width:951px;height:15px;background:#f0f0f0;"></div>
<div class="a" style="left:220px;top:708px;width:15px;height:15px;background:#d6d6d6;"></div>
<svg style="left:225px;top:711px" width="6" height="9" viewBox="0 0 6 9"><path d="M4.8 1.2 L1.5 4.5 L4.8 7.8" stroke="#a9a9a9" stroke-width="2" fill="none"/></svg>
<div class="a" style="left:1156px;top:708px;width:15px;height:15px;background:#d6d6d6;"></div>
<svg style="left:1161px;top:711px" width="6" height="9" viewBox="0 0 6 9"><path d="M1.2 1.2 L4.5 4.5 L1.2 7.8" stroke="#a9a9a9" stroke-width="2" fill="none"/></svg>
<div class="a" style="left:1186px;top:179px;width:250px;height:544px;background:#f0f0f0;"></div>
<div class="a" style="left:1186px;top:179px;width:1px;height:464px;background:#e0e0e0;"></div>
<div class="a" style="left:1188px;top:431px;width:6px;height:40px;background:#fff;border:1px solid #8a8a8a;border-radius:3px"></div>
<svg style="left:1190px;top:449px" width="4" height="6" viewBox="0 0 4 6"><path d="M0.5 0.5 L3.5 3 L0.5 5.5 Z" fill="#8a8a8a"/></svg>
<div class="a" style="left:1198px;top:182px;width:24px;height:24px;background:#cce4f7;border:1px solid #7eb4ea"></div>
<svg style="left:1204px;top:188px" width="12" height="12" viewBox="0 0 12 12"><rect x="0.5" y="0.5" width="11" height="11" stroke="#3a3a44" stroke-width="1" fill="none"/><rect x="2.5" y="2.5" width="7" height="3" stroke="#3a3a44" stroke-width="1" fill="none"/><rect x="2.5" y="7.5" width="2" height="2" stroke="#3a3a44" stroke-width="1" fill="none"/><rect x="7.5" y="7.5" width="2" height="2" stroke="#3a3a44" stroke-width="1" fill="none"/></svg>
<svg style="left:1228px;top:188px" width="12" height="12" viewBox="0 0 12 12"><rect x="0.5" y="0.5" width="11" height="11" stroke="#3a3a44" stroke-width="1" fill="none"/><rect x="2.5" y="2.5" width="7" height="3" stroke="#3a3a44" stroke-width="1" fill="none"/><rect x="2.5" y="7.5" width="2" height="2" stroke="#3a3a44" stroke-width="1" fill="none"/><rect x="7.5" y="7.5" width="2" height="2" stroke="#3a3a44" stroke-width="1" fill="none"/><path d="M6.5 14 L7.4 11 L13 5.4 L15.2 7.6 L9.6 13.2 Z" fill="#6ab4f0" stroke="#f0f0f0" stroke-width="0.8"/><path d="M6.5 14 L7.4 11 L13 5.4 L15.2 7.6 L9.6 13.2 Z" fill="none" stroke="#3a8ed8" stroke-width="0.9"/></svg>
<svg style="left:1253px;top:188px" width="12" height="12" viewBox="0 0 12 12"><rect x="0.5" y="0.5" width="11" height="11" stroke="#3a3a44" stroke-width="1" fill="none"/><rect x="2.5" y="2.5" width="7" height="3" stroke="#3a3a44" stroke-width="1" fill="none"/><rect x="2.5" y="7.5" width="2" height="2" stroke="#3a3a44" stroke-width="1" fill="none"/><rect x="7.5" y="7.5" width="2" height="2" stroke="#3a3a44" stroke-width="1" fill="none"/><circle cx="11.5" cy="10.5" r="4" fill="#e9a0ee" stroke="#c060d0" stroke-width="1"/><path d="M9.5 8.5 L13.5 12.5 M13.5 8.5 L9.5 12.5" stroke="#fff" stroke-width="1"/></svg>
<svg style="left:1279px;top:188px" width="12" height="12" viewBox="0 0 12 12"><rect x="0.6" y="0.6" width="10.8" height="10.8" fill="#3a8ed8" stroke="#3a3a44" stroke-width="1.2"/><rect x="2.6" y="2.8" width="6.8" height="2.4" fill="#fff"/><rect x="2.6" y="7" width="2.4" height="2.4" fill="#fff"/><rect x="7" y="7" width="2.4" height="2.4" fill="#fff"/></svg>
<svg style="left:1302px;top:186px" width="16" height="16" viewBox="0 0 16 16"><g transform="rotate(-45 8 8)" fill="none" stroke="#3a3a44" stroke-width="1.3"><rect x="0.5" y="4.8" width="9" height="6.4" rx="3.2"/><rect x="6.5" y="4.8" width="9" height="6.4" rx="3.2"/></g></svg>
<svg style="left:1326px;top:186px" width="18" height="18" viewBox="0 0 18 18"><path d="M8 0.8 L10.1 5.6 L15.3 6.1 L11.4 9.6 L12.5 14.7 L8 12.1 L3.5 14.7 L4.6 9.6 L0.7 6.1 L5.9 5.6 Z" fill="none" stroke="#3a3a44" stroke-width="1.2" stroke-linejoin="miter"/><circle cx="12.5" cy="12.5" r="4" fill="#f0f0f0" stroke="#4a9a3a" stroke-width="1"/><path d="M12.5 10.3 V14.7 M10.3 12.5 H14.7" stroke="#4a9a3a" stroke-width="1"/></svg>
<svg style="left:1352px;top:186.5px" width="16" height="16" viewBox="0 0 16 16"><path d="M8 0.8 L10.1 5.6 L15.3 6.1 L11.4 9.6 L12.5 14.7 L8 12.1 L3.5 14.7 L4.6 9.6 L0.7 6.1 L5.9 5.6 Z" fill="none" stroke="#3a3a44" stroke-width="1.2" stroke-linejoin="miter"/></svg>
<div class="arr" style="left:1421px;top:192px;border-top-color:#000"></div>
<div class="a" style="left:1198px;top:214px;width:233px;height:1px;background:#dcdcdc;"></div>
<div class="t " style="left:1199px;top:225px;font-weight:bold;letter-spacing:-0.35px;color:#000">Slide layout</div>
<div class="a" style="left:1198px;top:242px;width:234px;height:454px;background:#fff;border:1px solid #d9d9d9"></div>
<div class="a" style="left:1416px;top:243px;width:15px;height:452px;background:#f0f0f0;"></div>
<svg style="left:1419px;top:248px" width="9" height="6" viewBox="0 0 9 6"><path d="M0.7 5 L4.5 1.2 L8.3 5" stroke="#222" stroke-width="1.9" fill="none"/></svg>
<svg style="left:1419px;top:685px" width="9" height="6" viewBox="0 0 9 6"><path d="M0.7 1 L4.5 4.8 L8.3 1" stroke="#222" stroke-width="1.9" fill="none"/></svg>
<div class="a" style="left:1416px;top:258px;width:15px;height:166px;background:#c1c1c1;"></div>
<div class="a" style="left:1199px;top:243px;width:217px;height:452px;overflow:hidden">
<div class="a" style="left:50px;top:3px;width:118px;height:105px;border:2px solid #3399ff"></div>
<div class="a" style="left:58px;top:12px;width:105px;height:90px;background:#000"></div>
<div class="a" style="left:56px;top:10px;width:105px;height:90px;background:#fff;border:1px solid #000"></div>
<svg style="left:56px;top:10px" width="106" height="89" viewBox="0 0 106 89"><rect x="12.5" y="29.5" width="79" height="17" fill="none" stroke="#7a7a7a" stroke-width="1"/><rect x="17" y="36" width="70" height="5" fill="#808080"/><rect x="19.5" y="51.5" width="65" height="18" fill="none" stroke="#7a7a7a" stroke-width="1"/><rect x="25" y="58" width="54" height="3.5" fill="#c0c0c0"/></svg>
<div class="a" style="left:58px;top:117px;width:105px;height:90px;background:#000"></div>
<div class="a" style="left:56px;top:115px;width:105px;height:90px;background:#fff;border:1px solid #7a7a7a"></div>
<svg style="left:56px;top:115px" width="106" height="89" viewBox="0 0 106 89"><rect x="10.5" y="8.5" width="83" height="12" fill="none" stroke="#7a7a7a" stroke-width="1"/><rect x="15" y="12" width="74" height="4.5" fill="#808080"/><rect x="10.5" y="23.5" width="83" height="52" fill="none" stroke="#7a7a7a" stroke-width="1"/><rect x="14" y="26" width="2" height="2" fill="#808080"/><rect x="18" y="26" width="70" height="1.6" fill="#c0c0c0"/><rect x="18" y="31" width="67" height="1.6" fill="#c0c0c0"/><rect x="14" y="36" width="2" height="2" fill="#808080"/><rect x="18" y="36" width="70" height="1.6" fill="#c0c0c0"/><rect x="18" y="41" width="67" height="1.6" fill="#c0c0c0"/></svg>
<div class="a" style="left:58px;top:222px;width:105px;height:90px;background:#000"></div>
<div class="a" style="left:56px;top:220px;width:105px;height:90px;background:#fff;border:1px solid #7a7a7a"></div>
<svg style="left:56px;top:220px" width="106" height="89" viewBox="0 0 106 89"><rect x="13.5" y="38.5" width="78" height="17" fill="none" stroke="#7a7a7a" stroke-width="1"/><rect x="17" y="41.5" width="70" height="1.6" fill="#c0c0c0"/><rect x="13.5" y="55.5" width="78" height="16" fill="none" stroke="#7a7a7a" stroke-width="1"/><rect x="17" y="62" width="70" height="5" fill="#808080"/></svg>
<div class="a" style="left:58px;top:327px;width:105px;height:90px;background:#000"></div>
<div class="a" style="left:56px;top:325px;width:105px;height:90px;background:#fff;border:1px solid #7a7a7a"></div>
<svg style="left:56px;top:325px" width="106" height="89" viewBox="0 0 106 89"><rect x="10.5" y="8.5" width="83" height="12" fill="none" stroke="#7a7a7a" stroke-width="1"/><rect x="15" y="12" width="74" height="4.5" fill="#808080"/><rect x="10.5" y="23.5" width="40" height="52" fill="none" stroke="#7a7a7a" stroke-width="1"/><rect x="53.5" y="23.5" width="40" height="52" fill="none" stroke="#7a7a7a" stroke-width="1"/><rect x="13" y="26" width="2" height="2" fill="#808080"/><rect x="17" y="26" width="28" height="1.6" fill="#c0c0c0"/><rect x="17" y="31" width="25" height="1.6" fill="#c0c0c0"/><rect x="13" y="36" width="2" height="2" fill="#808080"/><rect x="17" y="36" width="28" height="1.6" fill="#c0c0c0"/><rect x="17" y="41" width="25" height="1.6" fill="#c0c0c0"/><rect x="57" y="26" width="2" height="2" fill="#808080"/><rect x="61" y="26" width="28" height="1.6" fill="#c0c0c0"/><rect x="61" y="31" width="25" height="1.6" fill="#c0c0c0"/><rect x="57" y="36" width="2" height="2" fill="#808080"/><rect x="61" y="36" width="28" height="1.6" fill="#c0c0c0"/><rect x="61" y="41" width="25" height="1.6" fill="#c0c0c0"/></svg>
<div class="a" style="left:58px;top:432px;width:105px;height:90px;background:#000"></div>
<div class="a" style="left:56px;top:430px;width:105px;height:90px;background:#fff;border:1px solid #7a7a7a"></div>
<svg style="left:56px;top:430px" width="106" height="89" viewBox="0 0 106 89"><rect x="10.5" y="8.5" width="83" height="12" fill="none" stroke="#7a7a7a" stroke-width="1"/><rect x="15" y="12" width="74" height="4.5" fill="#808080"/><rect x="10.5" y="20.5" width="40" height="52" fill="none" stroke="#7a7a7a" stroke-width="1"/><rect x="53.5" y="20.5" width="40" height="52" fill="none" stroke="#7a7a7a" stroke-width="1"/></svg>
</div>
<div class="t " style="left:1199px;top:704px;">Title slide</div>
<div class="a" style="left:0px;top:723px;width:1436px;height:26px;background:#f0f0f0;"></div>
<div class="a" style="left:0px;top:723px;width:1436px;height:1px;background:#bcbcbc;"></div>
<div class="t " style="left:5px;top:729px;">Open the menu</div>
<div class="a" style="left:752px;top:727px;width:1px;height:19px;background:#c0c0c0;"></div>
<div class="a" style="left:859px;top:727px;width:1px;height:19px;background:#c0c0c0;"></div>
<div class="a" style="left:1026px;top:727px;width:1px;height:19px;background:#c0c0c0;"></div>
<div class="t " style="left:760px;top:729px;">Slide 1 of 1</div>
<div class="t " style="left:866px;top:729px;">Slide1</div>
<div class="t " style="left:1041px;top:729px;">Ins</div>
<div class="a" style="left:1072px;top:725px;width:24px;height:25px;background:#cce4f7;border:1px solid #7eb4ea"></div>
<svg style="left:1078px;top:731px" width="12" height="12" viewBox="0 0 12 12"><rect x="0.5" y="0.5" width="11" height="11" stroke="#3a3a44" stroke-width="1" fill="none"/><rect x="2.5" y="2.5" width="7" height="3" stroke="#3a3a44" stroke-width="1" fill="none"/><rect x="2.5" y="7.5" width="2" height="2" stroke="#3a3a44" stroke-width="1" fill="none"/><rect x="7.5" y="7.5" width="2" height="2" stroke="#3a3a44" stroke-width="1" fill="none"/></svg>
<svg style="left:1101px;top:730px" width="16" height="14" viewBox="0 0 16 14"><rect x="0.6" y="0.6" width="6" height="4.5" fill="none" stroke="#3a3a44" stroke-width="1.1"/><rect x="0.6" y="8.4" width="6" height="4.5" fill="none" stroke="#3a3a44" stroke-width="1.1"/><rect x="9.4" y="0.6" width="6" height="4.5" fill="none" stroke="#3a3a44" stroke-width="1.1"/><rect x="9.4" y="8.4" width="6" height="4.5" fill="none" stroke="#3a3a44" stroke-width="1.1"/></svg>
<svg style="left:1125px;top:731px" width="18" height="13" viewBox="0 0 18 13"><path d="M0 1.5 H3.5 M0 5.5 H3.5 M0 9.5 H3.5" stroke="#3a3a44" stroke-width="1.1"/><g transform="translate(6,0)"><rect x="0.5" y="0.5" width="11" height="11" stroke="#3a3a44" stroke-width="1" fill="none"/><rect x="2.5" y="2.5" width="7" height="3" stroke="#3a3a44" stroke-width="1" fill="none"/><rect x="2.5" y="7.5" width="2" height="2" stroke="#3a3a44" stroke-width="1" fill="none"/><rect x="7.5" y="7.5" width="2" height="2" stroke="#3a3a44" stroke-width="1" fill="none"/></g></svg>
<svg style="left:1153.5px;top:731px" width="12" height="12" viewBox="0 0 12 12"><path d="M0.6 0.6 H11.4 V7.5 L7.5 11.4 H0.6 Z M11.4 7.5 H7.5 V11.4" fill="none" stroke="#3a3a44" stroke-width="1.1"/></svg>
<svg style="left:1178px;top:731px" width="12" height="13" viewBox="0 0 12 13"><rect x="0.5" y="0.5" width="11" height="9" fill="none" stroke="#3a3a44" stroke-width="1"/><path d="M4 2.3 L8.5 5 L4 7.7 Z" fill="#4a9a3a"/><path d="M4.5 9.5 V12.5 M7.5 9.5 V12.5 M3 12.5 H5.5 M6.5 12.5 H9" stroke="#3a3a44" stroke-width="1" fill="none"/></svg>
<div class="arr " style="left:1199.5px;top:735px"></div>
<div class="a" style="left:1221px;top:736px;width:7px;height:1px;background:#e04343;"></div>
<div class="a" style="left:1236px;top:736px;width:109px;height:1px;background:#c8c8c8;"></div>
<div class="a" style="left:1288px;top:730px;width:1px;height:13px;background:#c8c8c8;"></div>
<svg style="left:1258px;top:729px" width="15" height="15" viewBox="0 0 15 15"><circle cx="7.7" cy="7.5" r="6.1" fill="#f0f0f0" stroke="#3a3a44" stroke-width="1.8"/></svg>
<div class="a" style="left:1351px;top:736px;width:7px;height:1px;background:#4a9a3a;"></div>
<div class="a" style="left:1354px;top:733px;width:1px;height:7px;background:#4a9a3a;"></div>
<div class="t " style="left:1379px;top:730px;letter-spacing:-0.4px">63%</div>
<svg style="left:1413.5px;top:730px" width="7" height="5" viewBox="0 0 7 5"><path d="M0.5 0.3 L3 2.5 L0.5 4.7 M4 0.3 L6.5 2.5 L4 4.7" stroke="#55555c" stroke-width="1.2" fill="none"/></svg>
<div class="a" style="left:1435px;top:0px;width:1px;height:749px;background:#3a2c20;"></div>
</body></html>
